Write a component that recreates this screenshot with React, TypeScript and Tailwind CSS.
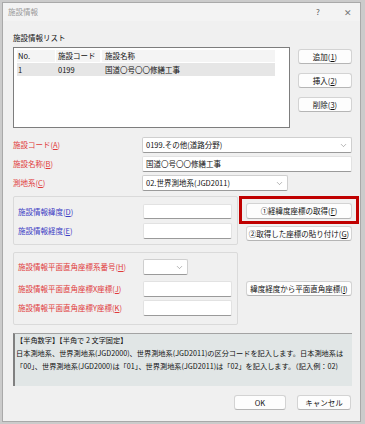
import { ChevronDown } from "lucide-react";
import type { ReactNode } from "react";

function Btn({ children, className }: { children: ReactNode; className: string }) {
  return (
    <div
      className={
        "flex items-center justify-center rounded-[3px] border border-[#d3d3d3] border-b-[#b5b5b5] bg-[#fdfdfd] text-[7.5px] leading-none text-[#111] whitespace-nowrap " +
        className
      }
    >
      {children}
    </div>
  );
}

function U({ children }: { children: ReactNode }) {
  return <span className="underline underline-offset-1">{children}</span>;
}

function Select({ text, className }: { text: string; className: string }) {
  return (
    <div
      className={
        "flex items-center rounded-[2px] border border-[#cfcfcf] border-b-[#9a9a9a] bg-white pl-[3px] pr-[3px] text-[7.5px] leading-none text-[#111] " +
        className
      }
    >
      <span className="whitespace-nowrap">{text}</span>
      <ChevronDown className="ml-auto" size={9} strokeWidth={1.3} color="#6a6a6a" />
    </div>
  );
}

function Input({ text, className }: { text?: string; className: string }) {
  return (
    <div
      className={
        "flex items-center rounded-[2px] border border-[#e2e2e2] border-b-[#9a9a9a] bg-white pl-[3px] text-[7.5px] leading-none text-[#111] " +
        className
      }
    >
      <span className="whitespace-nowrap">{text}</span>
    </div>
  );
}

export default function App() {
  return (
    <div className="h-[424px] w-[365px] overflow-hidden bg-[#cbcbcb] pl-[2px] pt-[2px] font-['Noto_Sans_CJK_JP','Noto_Sans',sans-serif]">
      <div className="flex h-[420px] w-[359px] flex-col border border-[#a9a9a9] bg-[#f0f0f0]">
        {/* title bar */}
        <div className="flex h-[18px] items-center bg-[#f3f3f3]">
          <span className="pl-[5px] text-[7.5px] leading-none text-[#9a9a9a]">施設情報</span>
          <div className="ml-auto flex items-center gap-[6px]">
            <span className="flex w-[24px] justify-center text-[8px] leading-none text-[#555]">?</span>
            <span className="flex w-[24px] justify-center text-[9px] leading-none text-[#777]">✕</span>
          </div>
        </div>

        <div className="flex flex-col pl-[10px] pr-[8px]">
          <div className="mt-[12px] h-[10px] text-[7.5px] leading-[10px] text-[#111]">施設情報リスト</div>

          {/* list + buttons */}
          <div className="mt-[4px] flex">
            <div className="h-[81px] w-[277px] border border-[#7d7d7d] bg-white pl-[3px] pt-[2px]">
              <div className="flex h-[12px] items-center text-[7.5px] leading-none text-[#111]">
                <div className="flex h-full w-[38px] items-center bg-[#f4f4f4] pl-[1px]">No.</div>
                <div className="ml-[1px] flex h-full w-[44px] items-center bg-[#f4f4f4] pl-[2px]">施設コード</div>
                <div className="ml-[2px] flex h-full w-[173px] items-center bg-[#f4f4f4] pl-[3px]">施設名称</div>
              </div>
              <div className="mt-[1px] flex h-[13px] w-[258px] items-center bg-[#e6e6e6] text-[7.5px] leading-none text-[#111]">
                <div className="w-[39px] pl-[1px]">1</div>
                <div className="w-[46px] pl-[2px]">0199</div>
                <div className="pl-[3px] whitespace-nowrap">国道〇号〇〇修繕工事</div>
              </div>
            </div>
            <div className="ml-auto mt-[2px] flex w-[54px] flex-col gap-[9px]">
              <Btn className="h-[15px]">追加(<U>1</U>)</Btn>
              <Btn className="h-[15px]">挿入(<U>2</U>)</Btn>
              <Btn className="h-[15px]">削除(<U>3</U>)</Btn>
            </div>
          </div>

          {/* A, B, C */}
          <div className="mt-[9px] flex items-center">
            <div className="w-[129px] text-[7.5px] leading-none text-[#e03a3a]">施設コード(<U>A</U>)</div>
            <Select text="0199.その他(道路分野)" className="h-[16px] w-[210px]" />
          </div>
          <div className="mt-[3px] flex items-center">
            <div className="w-[129px] text-[7.5px] leading-none text-[#e03a3a]">施設名称(<U>B</U>)</div>
            <Input text="国道〇号〇〇修繕工事" className="h-[16px] w-[210px]" />
          </div>
          <div className="mt-[3px] flex items-center">
            <div className="w-[129px] text-[7.5px] leading-none text-[#e03a3a]">測地系(<U>C</U>)</div>
            <Select text="02.世界測地系(JGD2011)" className="h-[16px] w-[146px]" />
          </div>

          {/* group 1 */}
          <div className="mt-[5px] flex">
            <div className="flex h-[49px] w-[225px] flex-col gap-[4px] rounded-[2px] border border-[#dadada] pl-[4px] pt-[7px]">
              <div className="flex items-center">
                <div className="w-[125px] text-[7.5px] leading-none text-[#3b3bc4]">施設情報緯度(<U>D</U>)</div>
                <Input className="h-[15px] w-[89px]" />
              </div>
              <div className="flex items-center">
                <div className="w-[125px] text-[7.5px] leading-none text-[#3b3bc4]">施設情報経度(<U>E</U>)</div>
                <Input className="h-[16px] w-[89px]" />
              </div>
            </div>
            <div className="ml-auto flex w-[106px] flex-col">
              <div className="relative mt-[7px]">
                <Btn className="h-[16px]">①経緯度座標の取得(<U>F</U>)</Btn>
                <div className="pointer-events-none absolute -bottom-[5px] -left-[7px] -right-[7px] -top-[7px] border-[3px] border-[#c00000]" />
              </div>
              <Btn className="mt-[7px] h-[15px]">②取得した座標の貼り付け(<U>G</U>)</Btn>
            </div>
          </div>

          {/* group 2 */}
          <div className="mt-[7px] flex">
            <div className="flex h-[73px] w-[225px] flex-col rounded-[2px] border border-[#dadada] pl-[4px] pt-[6px]">
              <div className="flex items-center">
                <div className="w-[125px] whitespace-nowrap text-[7.5px] leading-none text-[#e03a3a]">施設情報平面直角座標系番号(<U>H</U>)</div>
                <Select text="" className="h-[16px] w-[45px]" />
              </div>
              <div className="mt-[6px] flex items-center">
                <div className="w-[125px] whitespace-nowrap text-[7.5px] leading-none text-[#e03a3a]">施設情報平面直角座標X座標(<U>J</U>)</div>
                <Input className="h-[16px] w-[89px]" />
              </div>
              <div className="mt-[3px] flex items-center">
                <div className="w-[125px] whitespace-nowrap text-[7.5px] leading-none text-[#e03a3a]">施設情報平面直角座標Y座標(<U>K</U>)</div>
                <Input className="h-[16px] w-[89px]" />
              </div>
            </div>
            <div className="ml-auto flex w-[106px] flex-col">
              <Btn className="mt-[29px] h-[15px]">緯度経度から平面直角座標(<U>I</U>)</Btn>
            </div>
          </div>

          {/* help */}
          <div className="mt-[8px] h-[53px] border-l-2 border-t border-l-[#808080] border-t-[#a3a3a3] bg-[#e1e6e6] pl-[1px] text-[7.2px] leading-[13px] text-[#111]">
            <div className="whitespace-nowrap">【半角数字】【半角で 2 文字固定】</div>
            <div className="whitespace-nowrap">日本測地系、世界測地系(JGD2000)、世界測地系(JGD2011)の区分コードを記入します。日本測地系は</div>
            <div className="whitespace-nowrap">「00」、世界測地系(JGD2000)は「01」、世界測地系(JGD2011)は「02」を記入します。（記入例：02)</div>
          </div>

          {/* ok / cancel */}
          <div className="mt-[9px] flex justify-end gap-[11px] pr-[1px]">
            <Btn className="h-[15px] w-[52px]">OK</Btn>
            <Btn className="h-[15px] w-[54px]">キャンセル</Btn>
          </div>
        </div>
      </div>
    </div>
  );
}
